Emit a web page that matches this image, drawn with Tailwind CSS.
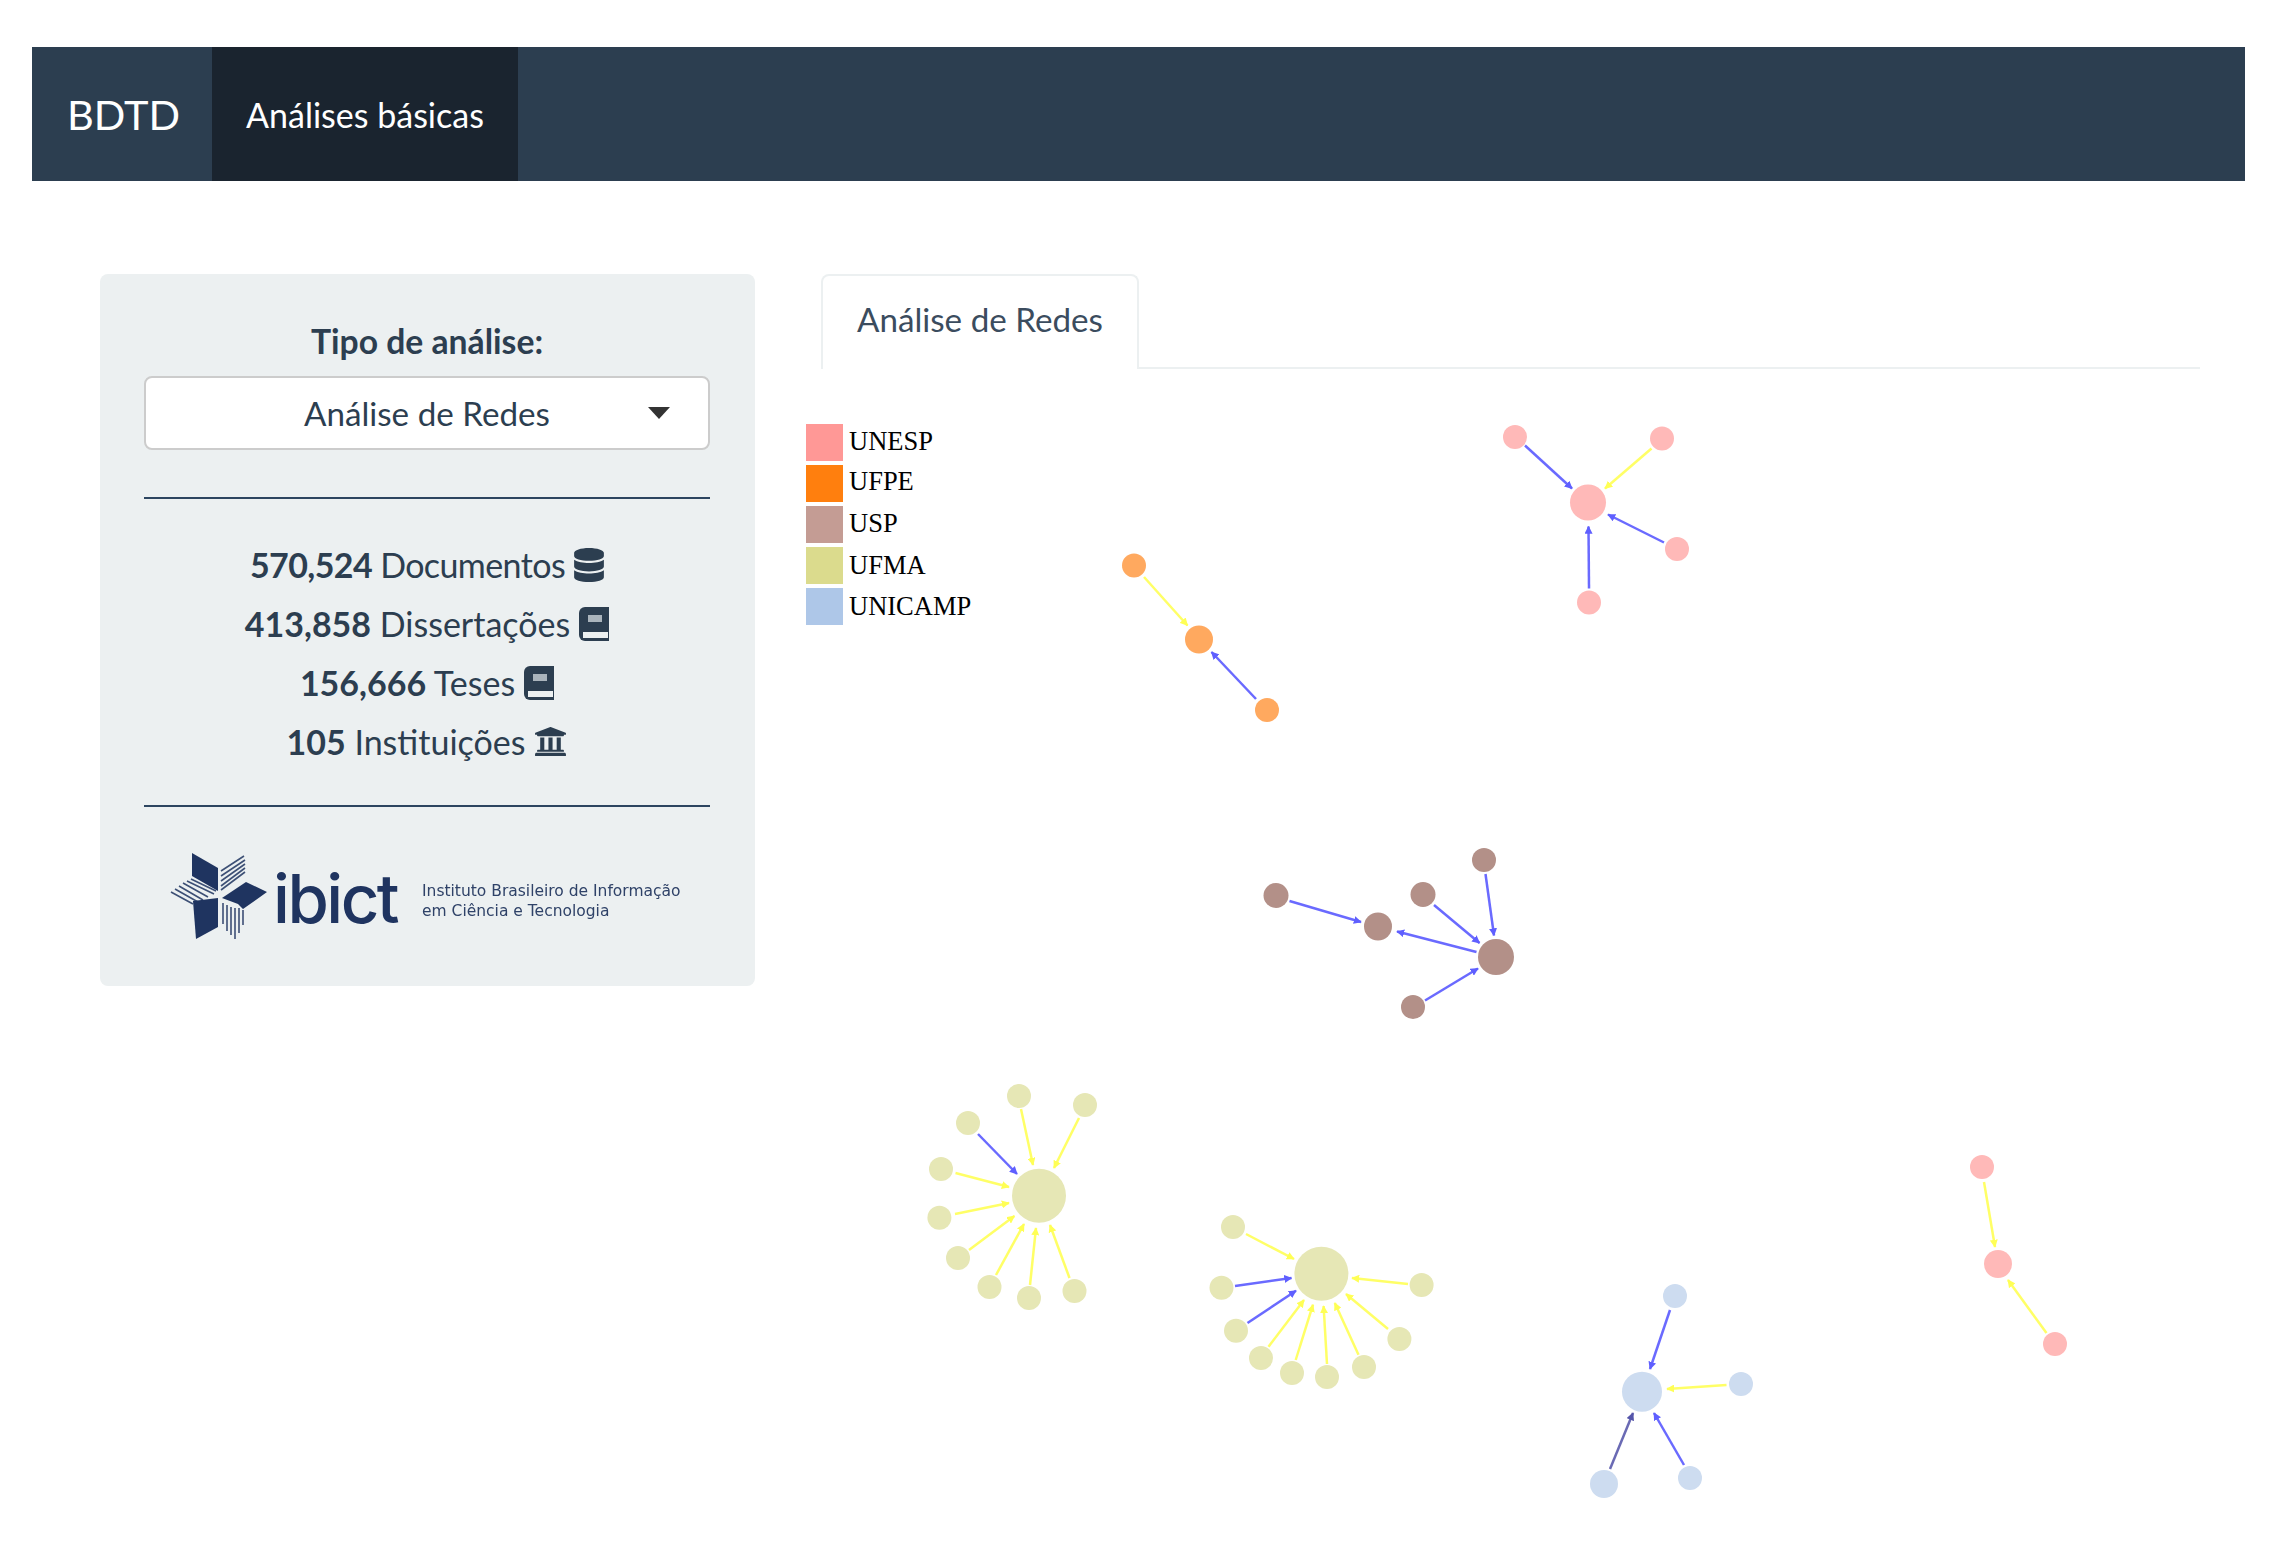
<!DOCTYPE html>
<html lang="pt">
<head>
<meta charset="utf-8">
<title>BDTD</title>
<script src="https://cdn.jsdelivr.net/npm/@tailwindcss/browser@4"></script>
</head>
<body class="bg-white text-[#2c3e50] font-['Lato','Liberation_Sans',sans-serif] w-[2291px] h-[1561px] overflow-hidden">
<div class="pt-[47px] pl-[32px] pr-[46px]">
  <nav class="h-[134px] bg-[#2c3e50] text-white flex items-stretch">
    <a class="w-[180px] pl-[35px] flex items-center text-[41.5px]">BDTD</a>
    <a class="w-[306px] pt-[1px] bg-[#1a242f] flex items-center justify-center text-[34px]">Análises básicas</a>
  </nav>
</div>
<main class="flex pt-[93px] pl-[100px]">
  <aside class="w-[655px] h-[712px] bg-[#ecf0f1] rounded-[8px] pl-[44px] pr-[45px] pt-[43px] text-center shrink-0">
    <div class="h-[48px] leading-[48px] text-[33.7px] font-bold">Tipo de análise:</div>
    <div class="mt-[11px] pt-[1px] h-[74px] bg-white border-2 border-[#cccccc] rounded-[8px] relative flex items-center justify-center text-[33.2px]">
      Análise de Redes
      <span class="absolute right-[38px] top-[29px] w-0 h-0 border-x-[11px] border-x-transparent border-t-[12px] border-t-[#333333]"></span>
    </div>
    <div class="mt-[47px] h-[2px] bg-[#2c4560]"></div>
    <div class="mt-[36px] flex flex-col text-[34px] leading-[59px]">
      <div class="h-[59px] flex items-center justify-center gap-[9px]"><span class="tracking-[-0.6px]"><b>570,524</b> Documentos</span>
        <svg viewBox="0 0 448 512" class="w-[30px] h-[34px] fill-[#2c3e50]"><path d="M448 73.143v45.714C448 159.143 347.667 192 224 192S0 159.143 0 118.857V73.143C0 32.857 100.333 0 224 0s224 32.857 224 73.143zM448 176v102.857C448 319.143 347.667 352 224 352S0 319.143 0 278.857V176c48.125 33.143 136.208 48.572 224 48.572S399.874 209.143 448 176zm0 160v102.857C448 479.143 347.667 512 224 512S0 479.143 0 438.857V336c48.125 33.143 136.208 48.572 224 48.572S399.874 369.143 448 336z"/></svg></div>
      <div class="h-[59px] flex items-center justify-center gap-[9px]"><span><b>413,858</b> Dissertações</span>
        <svg viewBox="0 0 30 34" class="w-[30px] h-[34px]"><path fill="#2c3e50" d="M6 0h24v34H6a6 6 0 0 1-6-6V6a6 6 0 0 1 6-6z"/><rect x="9" y="8" width="14" height="7" fill="#aab4bc"/><rect x="4" y="25" width="25" height="6" fill="#ecf0f1"/></svg></div>
      <div class="h-[59px] flex items-center justify-center gap-[9px]"><span><b>156,666</b> Teses</span>
        <svg viewBox="0 0 30 34" class="w-[30px] h-[34px]"><path fill="#2c3e50" d="M6 0h24v34H6a6 6 0 0 1-6-6V6a6 6 0 0 1 6-6z"/><rect x="9" y="8" width="14" height="7" fill="#aab4bc"/><rect x="4" y="25" width="25" height="6" fill="#ecf0f1"/></svg></div>
      <div class="h-[59px] flex items-center justify-center gap-[9px]"><span><b>105</b> Instituições</span>
        <svg viewBox="0 0 512 512" class="w-[33px] h-[33px] fill-[#2c3e50]"><path d="M496 128v16a8 8 0 0 1-8 8h-24v12c0 6.627-5.373 12-12 12H60c-6.627 0-12-5.373-12-12v-12H24a8 8 0 0 1-8-8v-16a8 8 0 0 1 4.941-7.392l232-88a7.996 7.996 0 0 1 6.118 0l232 88A8 8 0 0 1 496 128zm-24 304H40c-13.255 0-24 10.745-24 24v16a8 8 0 0 0 8 8h464a8 8 0 0 0 8-8v-16c0-13.255-10.745-24-24-24zM96 192v192H60c-6.627 0-12 5.373-12 12v20h416v-20c0-6.627-5.373-12-12-12h-36V192h-64v192h-64V192h-64v192h-64V192H96z"/></svg></div>
    </div>
    <div class="mt-[34px] h-[2px] bg-[#2c4560]"></div>
    <div class="mt-[45px] ml-[26px] flex items-center h-[87px] text-left blur-[0.5px]">
      <svg viewBox="170 853 98 88" class="w-[98px] h-[88px] shrink-0">
        <g fill="#1f3460">
          <polygon points="192,854 218,869 218,892 192,877"/>
          <polygon points="193,902 218,899 218,928 196,940"/>
          <polygon points="222,899 246,883 267,893 243,910 238,905"/>
        </g>
        <g stroke="#1f3460" stroke-width="1.6" fill="none" opacity="0.85">
          <path d="M221 872L244 857M221 877L245 861M221 882L245 865M221 887L245 869M221 891L245 873"/>
          <path d="M171 893L193 905M175 890L198 903M179 887L203 901M183 884L208 898M187 882L214 895M191 880L216 892"/>
          <path d="M223 904V925M227 906V932M231 908V936M235 909V940M239 909V934M243 911V926"/>
        </g>
      </svg>
      <span class="ml-[5px] mt-[14px] w-[124px] text-[#1f3460] text-[67px] leading-[51px] h-[60px] font-medium font-['Inter',sans-serif] tracking-[-2.5px] shrink-0">ibict</span>
      <div class="ml-[25px] mt-[10px] text-[#2f4268] text-[15.5px] leading-[20px] font-['DejaVu_Sans',sans-serif] whitespace-nowrap">Instituto Brasileiro de Informação<br>em Ciência e Tecnologia</div>
    </div>
  </aside>
  <section class="ml-[67px] w-[1378px]">
    <div class="h-[95px] border-b-2 border-[#ecf0f1] flex">
      <div class="w-[318px] -ml-[1px] h-[95px] pb-[5px] bg-white border-2 border-b-0 border-[#ecf0f1] rounded-t-[8px] flex items-center justify-center text-[33.2px] text-[#3b4c5e]">Análise de Redes</div>
    </div>
    <svg class="block ml-[-32px] w-[1460px] h-[1192px]" viewBox="790 369 1460 1192" xmlns="http://www.w3.org/2000/svg">
      <g>
        <rect x="806" y="424" width="37" height="37" fill="#ff9896"/>
        <rect x="806" y="465" width="37" height="37" fill="#ff7f0e"/>
        <rect x="806" y="506" width="37" height="37" fill="#c49c94"/>
        <rect x="806" y="547" width="37" height="37" fill="#dbdb8d"/>
        <rect x="806" y="588" width="37" height="37" fill="#aec7e8"/>
      </g>
      <g font-family="Liberation Serif" font-size="26.5" fill="#000">
        <text x="849" y="450">UNESP</text>
        <text x="849" y="490">UFPE</text>
        <text x="849" y="532">USP</text>
        <text x="849" y="574">UFMA</text>
        <text x="849" y="615">UNICAMP</text>
      </g>
      <defs>
        <marker id="b" viewBox="0 0 10 10" refX="9" refY="5" markerWidth="8" markerHeight="8" markerUnits="userSpaceOnUse" orient="auto"><path d="M0 0L10 5L0 10z" fill="#5f5fff"/></marker>
        <marker id="y" viewBox="0 0 10 10" refX="9" refY="5" markerWidth="8" markerHeight="8" markerUnits="userSpaceOnUse" orient="auto"><path d="M0 0L10 5L0 10z" fill="#ffff55"/></marker>
        <marker id="d" viewBox="0 0 10 10" refX="9" refY="5" markerWidth="8" markerHeight="8" markerUnits="userSpaceOnUse" orient="auto"><path d="M0 0L10 5L0 10z" fill="#5555aa"/></marker>
      </defs>
      <!-- UNESP cluster -->
      <g transform="translate(0,-1.5)">
        <g stroke="#6a6aff" stroke-width="2.5">
          <line x1="1525" y1="447" x2="1572" y2="490" marker-end="url(#b)"/>
          <line x1="1664" y1="544" x2="1608" y2="516" marker-end="url(#b)"/>
          <line x1="1589" y1="590" x2="1588.5" y2="528" marker-end="url(#b)"/>
        </g>
        <line x1="1651.5" y1="450" x2="1605" y2="490" stroke="#ffff66" stroke-width="2.5" marker-end="url(#y)"/>
        <g fill="#ffb9b8"><circle cx="1588" cy="504" r="18"/><circle cx="1515" cy="438.5" r="12"/><circle cx="1662" cy="440" r="12"/><circle cx="1677" cy="550.5" r="12"/><circle cx="1589" cy="604" r="12"/></g>
      </g>
      <!-- UFPE cluster -->
      <g transform="translate(0,-3)">
        <line x1="1256" y1="702" x2="1211.5" y2="655" stroke="#6a6aff" stroke-width="2.5" marker-end="url(#b)"/>
        <line x1="1144" y1="580" x2="1187.5" y2="628.5" stroke="#ffff66" stroke-width="2.5" marker-end="url(#y)"/>
        <g fill="#ffa95f"><circle cx="1134" cy="568.5" r="12"/><circle cx="1199" cy="642.5" r="14"/><circle cx="1267" cy="713" r="12"/></g>
      </g>
      <!-- USP cluster -->
      <g transform="translate(0,-3)">
        <g stroke="#6a6aff" stroke-width="2.5">
          <line x1="1485.5" y1="877" x2="1494" y2="938.5" marker-end="url(#b)"/>
          <line x1="1434" y1="908" x2="1479.5" y2="946" marker-end="url(#b)"/>
          <line x1="1289.5" y1="904" x2="1361" y2="925" marker-end="url(#b)"/>
          <line x1="1476.5" y1="955" x2="1397" y2="934.5" marker-end="url(#b)"/>
          <line x1="1425" y1="1003.5" x2="1478" y2="971.5" marker-end="url(#b)"/>
        </g>
        <g fill="#b39088"><circle cx="1496" cy="960" r="18"/><circle cx="1484" cy="863" r="12"/><circle cx="1423" cy="897.5" r="12.5"/><circle cx="1276" cy="898.5" r="12.5"/><circle cx="1378" cy="929.5" r="14"/><circle cx="1413" cy="1010" r="12"/></g>
      </g>
      <!-- lower clusters -->
      <g stroke="#6a6aff" stroke-width="2.5">
        <line x1="978" y1="1134" x2="1017" y2="1174" marker-end="url(#b)"/>
        <line x1="1235" y1="1286" x2="1291.5" y2="1278" marker-end="url(#b)"/>
        <line x1="1247.5" y1="1323" x2="1296" y2="1290.7" marker-end="url(#b)"/>
        <line x1="1670" y1="1310" x2="1650" y2="1369" marker-end="url(#b)"/>
        <line x1="1684" y1="1465" x2="1654" y2="1413" marker-end="url(#b)"/>
      </g>
      <line x1="1610" y1="1469" x2="1633" y2="1413" stroke="#6a6ab4" stroke-width="2.5" marker-end="url(#d)"/>
      <g stroke="#ffff66" stroke-width="2.5">
        <line x1="1021" y1="1109" x2="1033" y2="1165" marker-end="url(#y)"/>
        <line x1="1079" y1="1118" x2="1054" y2="1168" marker-end="url(#y)"/>
        <line x1="955.5" y1="1173" x2="1009" y2="1187" marker-end="url(#y)"/>
        <line x1="955" y1="1214" x2="1009" y2="1203" marker-end="url(#y)"/>
        <line x1="969" y1="1250" x2="1014.4" y2="1216" marker-end="url(#y)"/>
        <line x1="996" y1="1275" x2="1024" y2="1224" marker-end="url(#y)"/>
        <line x1="1030" y1="1285" x2="1036" y2="1228" marker-end="url(#y)"/>
        <line x1="1069.5" y1="1278" x2="1050" y2="1225" marker-end="url(#y)"/>
        <line x1="1246" y1="1234" x2="1294" y2="1259" marker-end="url(#y)"/>
        <line x1="1268.5" y1="1346.7" x2="1304" y2="1300" marker-end="url(#y)"/>
        <line x1="1295.7" y1="1360" x2="1313" y2="1304.7" marker-end="url(#y)"/>
        <line x1="1327" y1="1364" x2="1323.6" y2="1306" marker-end="url(#y)"/>
        <line x1="1358.5" y1="1354.7" x2="1334.8" y2="1303" marker-end="url(#y)"/>
        <line x1="1388" y1="1329" x2="1346" y2="1294" marker-end="url(#y)"/>
        <line x1="1408" y1="1284" x2="1352" y2="1278" marker-end="url(#y)"/>
        <line x1="1726.5" y1="1385" x2="1667" y2="1389" marker-end="url(#y)"/>
        <line x1="1984" y1="1182" x2="1995" y2="1247" marker-end="url(#y)"/>
        <line x1="2046.5" y1="1333" x2="2008" y2="1280" marker-end="url(#y)"/>
      </g>
      <g fill="#ffb9b8">
        <circle cx="1982" cy="1167" r="12"/><circle cx="1998" cy="1264" r="14"/><circle cx="2055" cy="1344" r="12"/>
      </g>
      <g fill="#e6e7b5">
        <circle cx="1039" cy="1195.7" r="27"/><circle cx="1019" cy="1096" r="12"/><circle cx="1085" cy="1105" r="12"/><circle cx="968" cy="1123" r="12"/><circle cx="941" cy="1169" r="12"/><circle cx="939.4" cy="1217.7" r="12"/><circle cx="958" cy="1258" r="12"/><circle cx="989.5" cy="1287" r="12"/><circle cx="1029" cy="1298" r="12"/><circle cx="1074.5" cy="1291" r="12"/>
        <circle cx="1321.4" cy="1273.7" r="27"/><circle cx="1233" cy="1227" r="12"/><circle cx="1221.5" cy="1287.7" r="12"/><circle cx="1236" cy="1330.7" r="12"/><circle cx="1261" cy="1358" r="12"/><circle cx="1292" cy="1373" r="12"/><circle cx="1327" cy="1377" r="12"/><circle cx="1364" cy="1367" r="12"/><circle cx="1399.4" cy="1339" r="12"/><circle cx="1421.6" cy="1285" r="12"/>
      </g>
      <g fill="#cddcf0">
        <circle cx="1642" cy="1391.7" r="20"/><circle cx="1675" cy="1296" r="12"/><circle cx="1741" cy="1384" r="12"/><circle cx="1690" cy="1478" r="12"/><circle cx="1604" cy="1484" r="14"/>
      </g>
    </svg>
  </section>
</main>
</body>
</html>
